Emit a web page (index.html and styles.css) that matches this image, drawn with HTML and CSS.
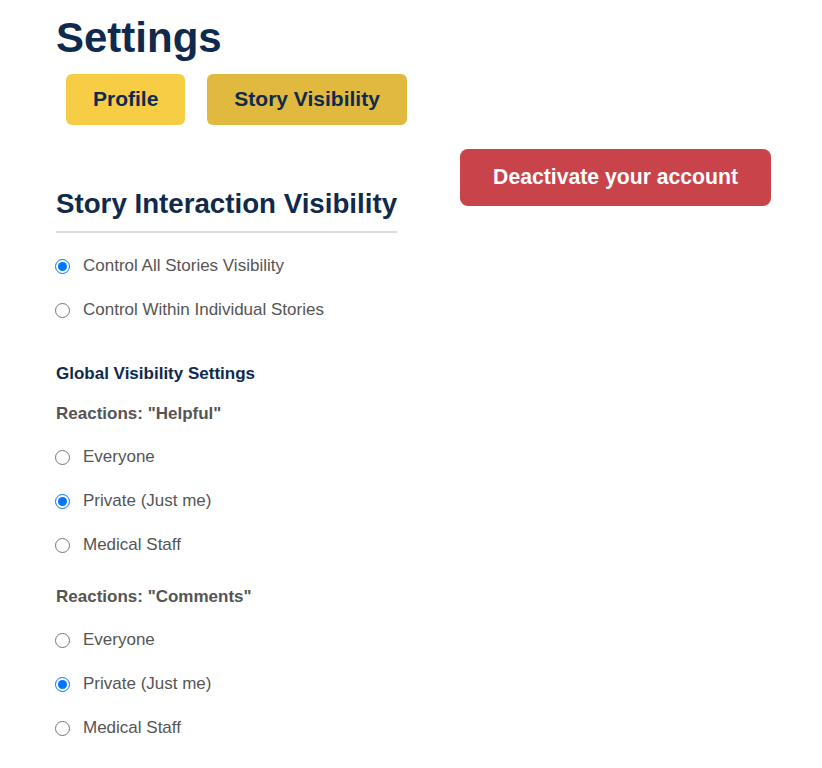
FILE: index.html
```html
<!DOCTYPE html>
<html lang="en">
<head>
<meta charset="utf-8">
<title>Settings</title>
<link rel="stylesheet" href="styles.css">
</head>
<body>
<div class="page">
  <h1 class="title">Settings</h1>
  <div class="tabs">
    <button class="tab">Profile</button>
    <button class="tab tab-active">Story Visibility</button>
  </div>
  <div class="content">
    <section class="visibility">
      <h2 class="section-title">Story Interaction Visibility</h2>
      <div class="options">
        <label class="option"><input type="radio" name="mode" checked> Control All Stories Visibility</label>
        <label class="option"><input type="radio" name="mode"> Control Within Individual Stories</label>
      </div>
      <h3 class="subhead">Global Visibility Settings</h3>
      <div class="group">
        <div class="group-label">Reactions: "Helpful"</div>
        <label class="option"><input type="radio" name="helpful"> Everyone</label>
        <label class="option"><input type="radio" name="helpful" checked> Private (Just me)</label>
        <label class="option"><input type="radio" name="helpful"> Medical Staff</label>
      </div>
      <div class="group">
        <div class="group-label">Reactions: "Comments"</div>
        <label class="option"><input type="radio" name="comments"> Everyone</label>
        <label class="option"><input type="radio" name="comments" checked> Private (Just me)</label>
        <label class="option"><input type="radio" name="comments"> Medical Staff</label>
      </div>
    </section>
    <button class="deactivate">Deactivate your account</button>
  </div>
</div>
</body>
</html>
```

FILE: styles.css
```css
html, body {
  margin: 0;
  padding: 0;
  background: #ffffff;
}

body {
  font-family: "Liberation Sans", Arial, Helvetica, sans-serif;
  color: #555555;
}

.page {
  padding: 0 51px 0 56px;
}

.title {
  margin: 14px 0 0;
  font-size: 42px;
  line-height: 48px;
  font-weight: 700;
  color: #0f2a4d;
}

.tabs {
  display: flex;
  gap: 22px;
  margin: 12px 0 0 10px;
}

.tab {
  height: 51px;
  padding: 0 27px 1px;
  border: none;
  border-radius: 6px;
  background: #f7cd46;
  color: #0f2a4d;
  font-family: inherit;
  font-size: 21px;
  font-weight: 700;
}

.tab-active {
  background: #e0b93e;
}

.content {
  display: flex;
  justify-content: space-between;
  align-items: flex-start;
  margin-top: 24px;
}

.section-title {
  display: inline-block;
  margin: 39px 0 0;
  padding-bottom: 11px;
  border-bottom: 2px solid #dcdcdc;
  font-size: 27.7px;
  line-height: 32px;
  font-weight: 700;
  color: #0f2a4d;
}

.options {
  margin-top: 11px;
}

.option {
  display: flex;
  align-items: center;
  height: 44px;
  font-size: 17px;
  color: #555555;
}

.option input {
  width: 15px;
  height: 15px;
  margin: 0 13px 0 -1px;
}

.subhead {
  margin: 32px 0 20px;
  font-size: 17px;
  line-height: 20px;
  font-weight: 700;
  color: #0f2a4d;
}

.group {
  margin-bottom: 20px;
}

.group-label {
  margin-bottom: 11px;
  font-size: 17px;
  line-height: 20px;
  font-weight: 700;
  color: #555555;
}

.deactivate {
  height: 57px;
  padding: 0 33px 1px;
  border: none;
  border-radius: 8px;
  background: #c9434b;
  color: #ffffff;
  font-family: inherit;
  font-size: 21.2px;
  font-weight: 700;
}
```
